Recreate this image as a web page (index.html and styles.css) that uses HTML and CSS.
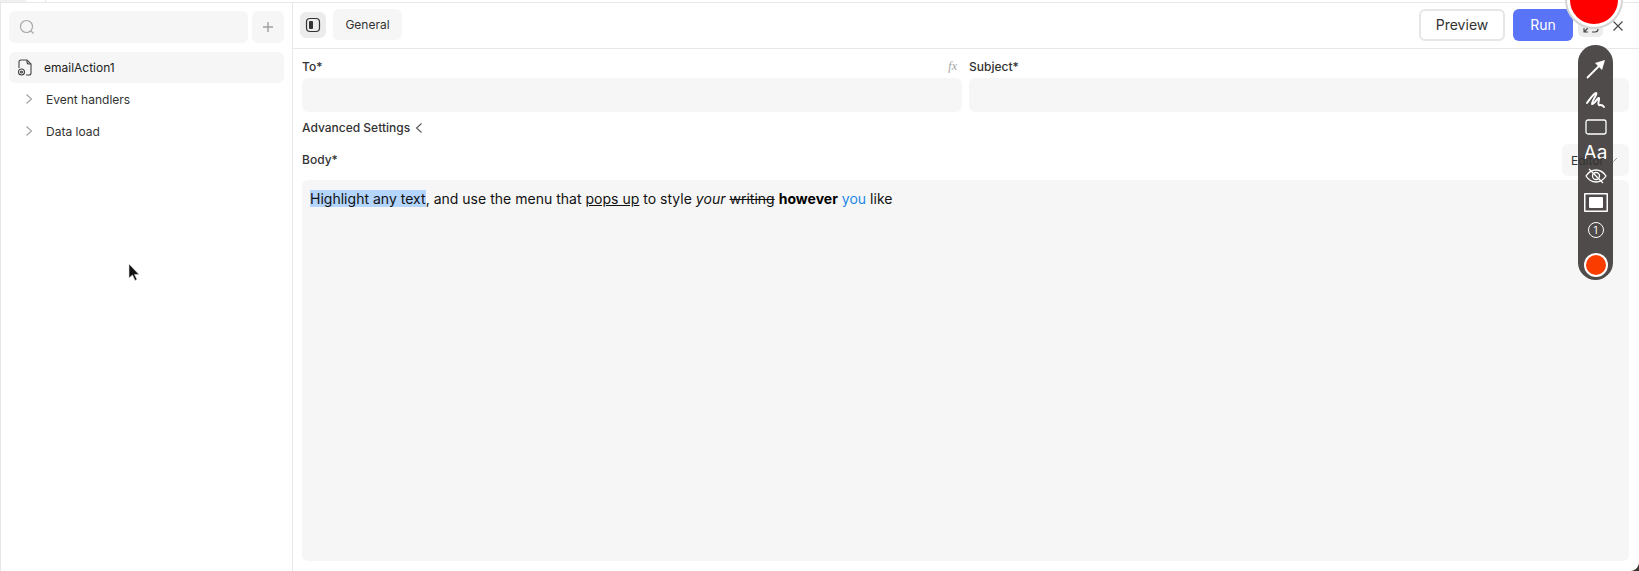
FILE: index.html
```html
<!DOCTYPE html>
<html lang="en">
<head>
    <meta charset="UTF-8">
    <meta name="viewport" content="width=device-width, initial-scale=1.0">
    <title>emailAction1</title>
    <link rel="stylesheet" href="styles.css">
</head>
<body>
    <div class="top-strip">
        <span class="strip-tab"></span>
        <span class="strip-tab2"></span>
    </div>
    <div class="app">
        <aside class="sidebar">
            <div class="search-row">
                <div class="search">
                    <svg width="18" height="18" viewBox="0 0 18 18" fill="none" stroke="#a8a8a8" stroke-width="1.2"><circle cx="8.500" cy="8.500" r="6"/><path d="M13 13l2.500 2.500"/></svg>
                </div>
                <div class="add">
                    <svg width="12" height="12" viewBox="0 0 12 12" fill="none" stroke="#a0a0a0" stroke-width="1.4"><path d="M6 1v10M1 6h10"/></svg>
                </div>
            </div>
            <div class="action-item">
                <svg class="file-icon" width="16" height="17" viewBox="0 0 16 17" fill="none" stroke="#444" stroke-width="1.1"><path d="M2 9V3a2 2 0 0 1 2-2h6l4 4v9a2 2 0 0 1-2 2H9"/><path d="M10 1v2a2 2 0 0 0 2 2h2"/><circle cx="4.500" cy="13" r="3"/><circle cx="4.500" cy="13" r="1"/></svg>
                emailAction1
            </div>
            <div class="tree-item">
                <svg width="8" height="12" viewBox="0 0 8 12" fill="none" stroke="#a0a0a0" stroke-width="1.1"><path d="M1.500 1.500L6.500 6l-5 4.500"/></svg>
                Event handlers
            </div>
            <div class="tree-item">
                <svg width="8" height="12" viewBox="0 0 8 12" fill="none" stroke="#a0a0a0" stroke-width="1.1"><path d="M1.500 1.500L6.500 6l-5 4.500"/></svg>
                Data load
            </div>
        </aside>

        <main class="main">
            <header class="toolbar">
                <div class="panel-btn">
                    <svg width="16" height="16" viewBox="0 0 16 16" fill="none" stroke="#333" stroke-width="1.2"><rect x="1.500" y="1.500" width="13" height="13" rx="3.500"/><rect x="4" y="4" width="4" height="8" rx="1" fill="#333" stroke="none"/></svg>
                </div>
                <div class="tab">General</div>
                <div class="toolbar-right">
                    <button class="preview">Preview</button>
                    <button class="run">Run</button>
                    <div class="expand">
                        <svg width="16" height="12" viewBox="0 0 16 12" fill="none" stroke="#444" stroke-width="1.1"><path d="M1 11l4-4M1 7v4h4M9 11h3a3 3 0 0 0 3-3"/></svg>
                    </div>
                    <svg class="close" width="12" height="12" viewBox="0 0 12 12" fill="none" stroke="#444" stroke-width="1.1"><path d="M1.500 1.500l9 9M10.500 1.500l-9 9"/></svg>
                </div>
            </header>

            <div class="form">
                <div class="fields">
                    <div class="field">
                        <div class="label-row">
                            <label>To*</label>
                            <span class="fx">fx</span>
                        </div>
                        <div class="input"></div>
                    </div>
                    <div class="field">
                        <div class="label-row">
                            <label>Subject*</label>
                        </div>
                        <div class="input"></div>
                    </div>
                </div>
                <div class="advanced">
                    Advanced Settings
                    <svg width="8" height="12" viewBox="0 0 8 12" fill="none" stroke="#555" stroke-width="1.1"><path d="M6.500 1.500L1.500 6l5 4.500"/></svg>
                </div>
                <div class="body-row">
                    <label>Body*</label>
                    <div class="editor-select">
                        <span class="editor-label">Editor</span>
                        <svg width="9" height="6" viewBox="0 0 9 6" fill="none" stroke="#999" stroke-width="1"><path d="M1 1l3.500 3.500L8 1"/></svg>
                    </div>
                </div>
                <div class="editor">
                    <span class="hl">Highlight any text</span>, and use the menu that <u>pops up</u> to style <em>your</em> <s>writing</s> <strong>however</strong> <span class="blue">you</span> like
                </div>
            </div>
        </main>
    </div>

    <!-- screen recorder overlay -->
    <div class="rec-dot"></div>
    <div class="rec-tools">
        <svg class="t-arrow" width="19" height="19" viewBox="0 0 19 19" fill="none" stroke="#fff" stroke-width="1.800"><path d="M1 18L14 5"/><path d="M19 0L9 3l7 7z" fill="#fff" stroke="none"/></svg>
        <svg class="t-pen" width="21" height="20" viewBox="0 0 21 20" fill="none" stroke="#fff" stroke-width="2" stroke-linecap="round" stroke-linejoin="round"><path d="M2 13C5 9 9 3 11 3c2 0-5 10-4 11 2 1 6-7 7-6s-2 6 0 7c1 1 2-2 5 2"/></svg>
        <svg class="t-rect" width="22" height="16" viewBox="0 0 22 16" fill="none" stroke="#fff" stroke-width="1.300"><rect x="1" y="1" width="20" height="14" rx="2"/></svg>
        <div class="rec-text">Aa</div>
        <svg class="t-eye" width="22" height="16" viewBox="0 0 22 16" fill="none" stroke="#fff" stroke-width="1.300"><path d="M1 8c3-4.500 6.500-6 10-6s7 1.500 10 6c-3 4.500-6.500 6-10 6S4 12.500 1 8z"/><circle cx="11" cy="8" r="3.500"/><path d="M4 1l14 14"/></svg>
        <svg class="t-screen" width="24" height="19" viewBox="0 0 24 19" fill="#fff" stroke="none"><path fill-rule="evenodd" d="M1 0h22a1 1 0 0 1 1 1v17a1 1 0 0 1-1 1H1a1 1 0 0 1-1-1V1a1 1 0 0 1 1-1zm.500 1.500v16h21v-16z"/><rect x="5" y="4" width="14" height="11" rx="1"/></svg>
        <div class="rec-num">1</div>
        <div class="rec-color"></div>
    </div>

    <svg class="cursor" width="13" height="19" viewBox="0 0 13 19"><path d="M1 1v14l3.500-3 2.500 5.500 2-1-2.500-5H11z" fill="#111" stroke="#ddd" stroke-width=".6"/></svg>
    <div class="corner"></div>
</body>
</html>
```

FILE: styles.css
```css
* {
    box-sizing: border-box;
}
body {
    margin: 0;
    height: 571px;
    overflow: hidden;
    background: #fff;
    font-family: Inter, "Liberation Sans", sans-serif;
    font-size: 12px;
    color: #333;
    position: relative;
}
label {
    font-weight: 500;
}
.top-strip {
    height: 3px;
    display: flex;
    border-bottom: 1px solid #e8e8e8;
}
.strip-tab {
    width: 26px;
    background: #f0f0f0;
}
.strip-tab2 {
    width: 20px;
    border-right: 1px solid #e4e4e4;
}
.app {
    display: flex;
    height: 568px;
    border-left: 1px solid #e6e6e6;
}

/* left panel */
.sidebar {
    width: 292px;
    flex: none;
    border-right: 1px solid #e8e8e8;
    padding: 8px 8px 0 8px;
}
.search-row {
    display: flex;
    gap: 4px;
    height: 32px;
    margin-bottom: 9px;
}
.search {
    flex: 1;
    background: #f6f6f6;
    border-radius: 6px;
    display: flex;
    align-items: center;
    padding-left: 9px;
}
.add {
    width: 32px;
    background: #f6f6f6;
    border-radius: 6px;
    display: flex;
    align-items: center;
    justify-content: center;
}
.action-item {
    height: 31px;
    background: #f6f6f6;
    border-radius: 6px;
    display: flex;
    align-items: center;
    gap: 11px;
    padding-left: 8px;
    color: #222;
}
.tree-item {
    height: 32px;
    display: flex;
    align-items: center;
    gap: 13px;
    padding-left: 16px;
}

/* main panel */
.main {
    flex: 1;
    min-width: 0;
}
.toolbar {
    height: 46px;
    border-bottom: 1px solid #e8e8e8;
    display: flex;
    align-items: center;
    padding: 0 0 2px 7px;
    gap: 7px;
}
.panel-btn {
    width: 26px;
    height: 26px;
    background: #ececec;
    border-radius: 6px;
    display: flex;
    align-items: center;
    justify-content: center;
}
.tab {
    width: 69px;
    height: 31px;
    background: #f6f6f6;
    border-radius: 6px;
    display: flex;
    align-items: center;
    justify-content: center;
    color: #333;
}
.toolbar-right {
    margin-left: auto;
    display: flex;
    align-items: center;
}
.preview,
.run {
    font-family: inherit;
    font-size: 14px;
    height: 32px;
    border-radius: 6px;
    padding: 0;
}
.preview {
    width: 86px;
    background: #fff;
    border: 2px solid #e6e6e6;
    color: #333;
    margin-right: 8px;
}
.run {
    width: 60px;
    background: #5a74f8;
    border: none;
    color: #fff;
    margin-right: 5px;
}
.expand {
    width: 25px;
    height: 19px;
    background: #ececec;
    border-radius: 5px;
    margin-top: 6px;
    margin-right: 9px;
    padding-bottom: 2px;
    display: flex;
    align-items: center;
    justify-content: center;
}
.close {
    margin-right: 15px;
    margin-top: 2px;
}

.form {
    padding: 0 10px 0 9px;
}
.fields {
    display: grid;
    grid-template-columns: 1fr 1fr;
    gap: 7px;
}
.label-row {
    height: 29px;
    padding-top: 5px;
    display: flex;
    align-items: center;
    justify-content: space-between;
}
.fx {
    font-family: "Liberation Serif", serif;
    font-style: italic;
    font-size: 12px;
    color: #a5a5a5;
    margin-right: 5px;
}
.input {
    height: 34px;
    background: #f6f6f6;
    border-radius: 6px;
}
.advanced {
    height: 31px;
    display: flex;
    align-items: center;
    gap: 5px;
    font-weight: 500;
}
.body-row {
    height: 36px;
    margin-top: 1px;
    display: flex;
    align-items: flex-start;
    justify-content: space-between;
}
.body-row label {
    line-height: 32px;
}
.editor-select {
    width: 67px;
    height: 32px;
    background: #f6f6f6;
    border-radius: 6px;
    display: flex;
    align-items: center;
    gap: 5px;
    padding-left: 9px;
}
.editor-label {
    position: relative;
    z-index: 2;
}
.editor {
    height: 381px;
    background: #f6f6f6;
    border-radius: 6px;
    padding: 9px 8px;
    font-size: 14px;
    line-height: 20px;
    letter-spacing: .015px;
    color: #111;
}
.hl {
    background: #b4d5fe;
}
.blue {
    color: #1e88e5;
}
strong {
    color: #000;
}

/* overlay */
.rec-dot {
    position: absolute;
    z-index: 1;
    left: 1567px;
    top: -27px;
    width: 54px;
    height: 54px;
    border-radius: 50%;
    background: #f00;
    border: 3px solid #fff;
    box-shadow: 0 0 0 2px #d4d4d4;
}
.rec-tools {
    position: absolute;
    z-index: 1;
    left: 1578px;
    top: 45px;
    width: 35px;
    height: 235px;
    background: #4f4b4a;
    border-radius: 18px;
    display: flex;
    flex-direction: column;
    align-items: center;
    padding-top: 15px;
}
.rec-tools svg {
    flex: none;
}
.t-pen {
    margin-top: 11px;
}
.t-rect {
    margin-top: 9px;
}
.rec-text {
    color: #fff;
    font-size: 19px;
    line-height: 18px;
    margin-top: 9px;
}
.t-eye {
    margin-top: 6px;
}
.t-screen {
    margin-top: 9px;
}
.rec-num {
    width: 16px;
    height: 16px;
    margin-top: 10px;
    border: 1.2px solid #fff;
    border-radius: 50%;
    color: #fff;
    font-size: 10px;
    line-height: 14px;
    text-align: center;
}
.rec-color {
    width: 24px;
    height: 24px;
    margin-top: 15px;
    border-radius: 50%;
    background: #fa3c00;
    border: 2px solid #fff;
}
.cursor {
    position: absolute;
    left: 128px;
    top: 263px;
}
.corner {
    position: absolute;
    right: 0;
    bottom: 0;
    width: 9px;
    height: 9px;
    background: radial-gradient(circle at 0 0, #fff 8.500px, #3a3532 9.500px);
}
```
